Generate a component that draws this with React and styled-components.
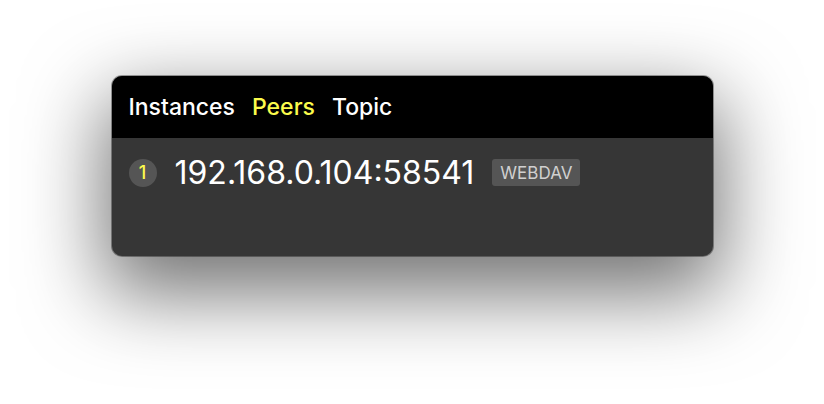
import React from "react";
import styled, { createGlobalStyle } from "styled-components";

const GlobalStyle = createGlobalStyle`
  html, body {
    margin: 0;
    padding: 0;
    background: #ffffff;
  }
  body {
    font-family: Inter, "Liberation Sans", sans-serif;
  }
`;

const Page = styled.div`
  width: 824px;
  height: 404px;
  box-sizing: border-box;
  padding-top: 76px;
  display: flex;
  justify-content: center;
  align-items: flex-start;
`;

const Window = styled.div`
  width: 601px;
  height: 180px;
  border-radius: 10px;
  overflow: hidden;
  display: flex;
  flex-direction: column;
  background: #363636;
  box-shadow: 0 30px 80px 8px rgba(0, 0, 0, 0.55), 0 0 0 1px rgba(0, 0, 0, 0.35);
`;

const TabBar = styled.div`
  height: 62px;
  flex-shrink: 0;
  display: flex;
  align-items: center;
  gap: 17px;
  padding: 0 17px;
  background: #000000;
`;

const Tab = styled.span`
  font-size: 23px;
  font-weight: 500;
  color: ${(p) => (p.active ? "#fbfb4c" : "#ffffff")};
  cursor: pointer;
`;

const PeerList = styled.div`
  display: flex;
  flex-direction: column;
  padding: 15px 17px;
`;

const PeerRow = styled.div`
  display: flex;
  align-items: center;
`;

const Index = styled.span`
  width: 28px;
  height: 28px;
  border-radius: 50%;
  background: #555555;
  color: #fbfb4c;
  font-size: 18px;
  font-weight: 500;
  display: flex;
  align-items: center;
  justify-content: center;
  margin-right: 18px;
`;

const Address = styled.span`
  font-size: 32px;
  font-weight: 400;
  color: #ffffff;
  margin-right: 18px;
`;

const Protocol = styled.span`
  height: 27px;
  padding: 0 8px;
  border-radius: 3px;
  background: #555555;
  color: #d0d0d0;
  font-size: 17px;
  font-weight: 400;
  display: flex;
  align-items: center;
`;

const tabs = ["Instances", "Peers", "Topic"];
const peers = [{ id: 1, address: "192.168.0.104:58541", kind: "WEBDAV" }];

export default function App() {
  return (
    <>
      <GlobalStyle />
      <Page>
        <Window>
          <TabBar>
            {tabs.map((t) => (
              <Tab key={t} active={t === "Peers"}>
                {t}
              </Tab>
            ))}
          </TabBar>
          <PeerList>
            {peers.map((p) => (
              <PeerRow key={p.id}>
                <Index>{p.id}</Index>
                <Address>{p.address}</Address>
                <Protocol>{p.kind}</Protocol>
              </PeerRow>
            ))}
          </PeerList>
        </Window>
      </Page>
    </>
  );
}
